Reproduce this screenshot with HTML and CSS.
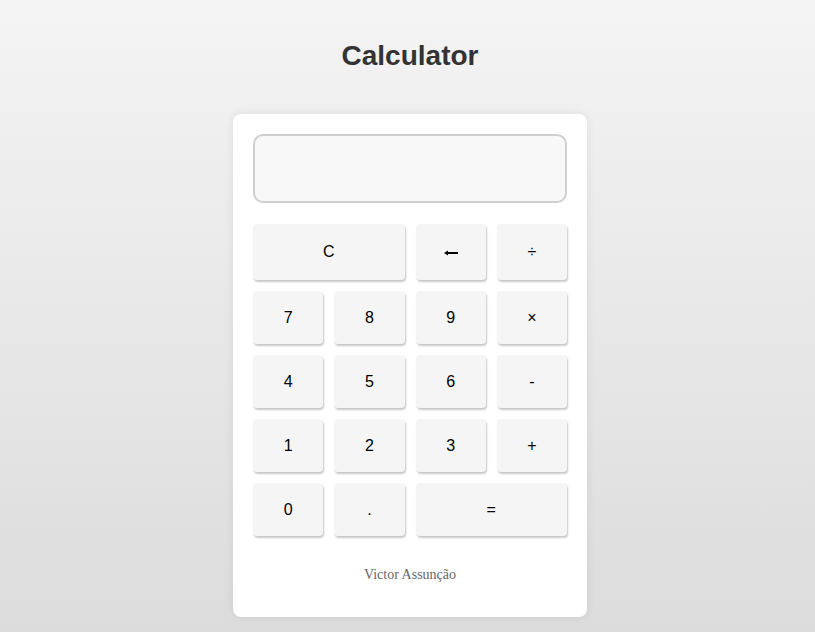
FILE: index.html
```html
<!DOCTYPE html>
<html lang="pt">
<head>
<meta charset="utf-8">
<title>Calculator</title>
<link rel="stylesheet" href="styles.css">
</head>
<body>
<main class="page">
  <h1 class="title">Calculator</h1>
  <section class="calc">
    <div class="display"></div>
    <div class="keys">
      <button class="key wide">C</button>
      <button class="key" aria-label="Backspace"><svg class="arrow" width="14" height="6" viewBox="0 0 14 6"><path d="M3 3H14" stroke="#000" stroke-width="2"/><path d="M0 3L4 0.5V5.5Z" fill="#000"/></svg></button>
      <button class="key">&divide;</button>
      <button class="key">7</button>
      <button class="key">8</button>
      <button class="key">9</button>
      <button class="key">&times;</button>
      <button class="key">4</button>
      <button class="key">5</button>
      <button class="key">6</button>
      <button class="key">-</button>
      <button class="key">1</button>
      <button class="key">2</button>
      <button class="key">3</button>
      <button class="key">+</button>
      <button class="key">0</button>
      <button class="key">.</button>
      <button class="key wide">=</button>
    </div>
    <p class="author">Victor Assunção</p>
  </section>
</main>
</body>
</html>
```

FILE: styles.css
```css
html, body {
  margin: 0;
  padding: 0;
}
body {
  min-height: 100vh;
  background: linear-gradient(#f4f4f4, #dcdcdc);
  font-family: "Liberation Sans", Arial, sans-serif;
}
.page {
  display: flex;
  flex-direction: column;
  align-items: center;
  padding-left: 5px;
}
.title {
  margin: 40px 0 42px;
  font-size: 28px;
  line-height: 32px;
  font-weight: bold;
  color: #333;
}
.calc {
  width: 314px;
  padding: 20px;
  background: #fff;
  border-radius: 8px;
  box-shadow: 0 0 10px rgba(0, 0, 0, 0.08);
}
.display {
  height: 65px;
  border: 2px solid #cfcfcf;
  border-radius: 10px;
  background: #f8f8f8;
  margin-bottom: 21px;
}
.keys {
  display: grid;
  grid-template-columns: repeat(4, 1fr);
  grid-template-rows: 56px;
  grid-auto-rows: 53px;
  gap: 11px;
}
.key {
  border: none;
  border-radius: 4px;
  background: #f5f5f5;
  box-shadow: 1px 2px 2px rgba(0, 0, 0, 0.22);
  font-family: "Liberation Sans", Arial, sans-serif;
  font-size: 16px;
  color: #000;
  padding: 0;
  display: flex;
  align-items: center;
  justify-content: center;
}
.arrow {
  display: block;
  margin-top: 1px;
}
.wide {
  grid-column: span 2;
}
.author {
  margin: 30px 0 14px;
  text-align: center;
  font-family: "Liberation Serif", "Times New Roman", serif;
  font-size: 14px;
  line-height: 17px;
  color: #666;
}
```
